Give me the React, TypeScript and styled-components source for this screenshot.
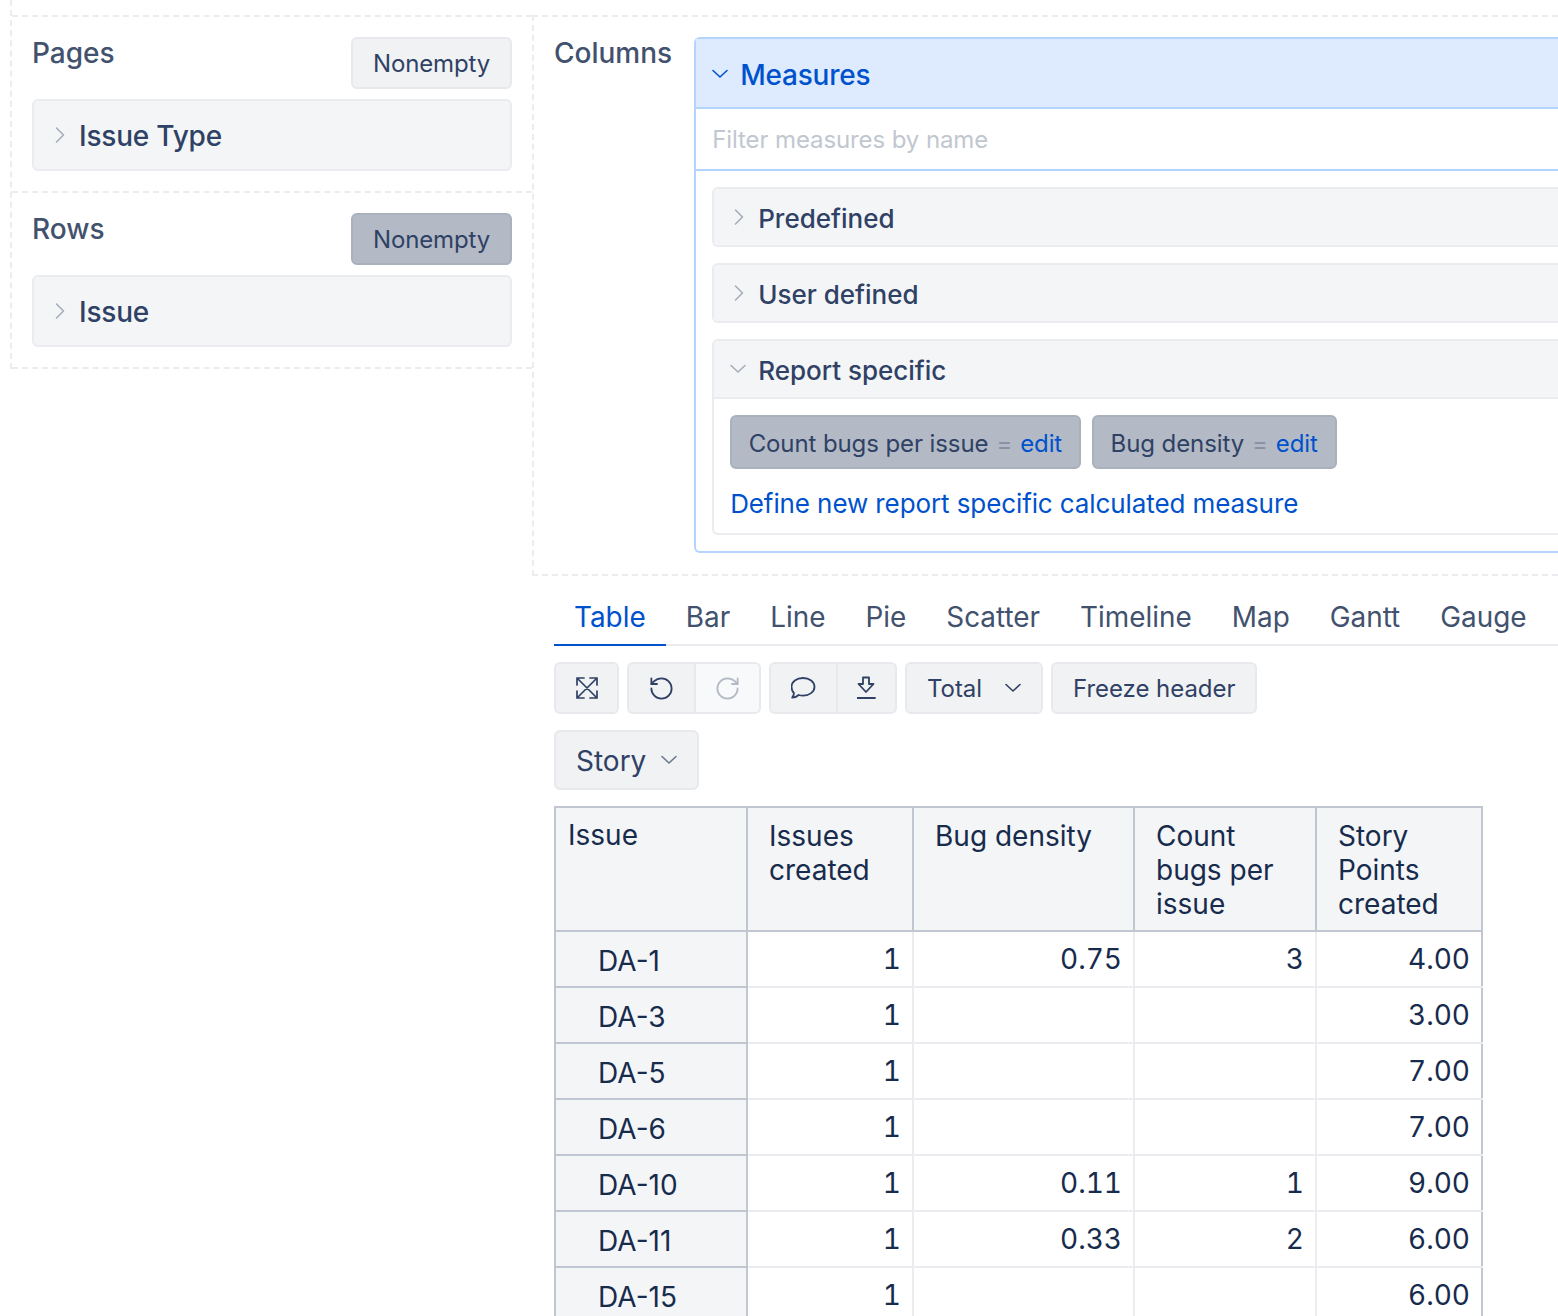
import React from "react";
import styled, { createGlobalStyle } from "styled-components";

const Global = createGlobalStyle`
  html, body { margin: 0; padding: 0; background: #fff; height: 1316px; overflow: hidden; }
  body { font-family: Inter, "Liberation Sans", sans-serif; color: #172b4d; }
  * { box-sizing: border-box; }
`;

const Page = styled.div`
  display: flex;
  align-items: flex-start;
  width: 1558px;
  height: 1316px;
  overflow: hidden;
  padding: 0 0 0 10px;
`;

const LeftColumn = styled.div`
  flex: 0 0 522px;
  padding-top: 15px;
  border-left: 2px dashed #ebecf0;
`;

const DropZone = styled.section`
  height: 176px;
  padding: 20px 20px 0 20px;
  border-top: 2px dashed #ebecf0;
  &:last-child {
    height: 178px;
    border-bottom: 2px dashed #ebecf0;
  }
`;

const ZoneHeader = styled.div`
  display: flex;
  justify-content: space-between;
  align-items: flex-start;
`;

const ZoneLabel = styled.h3`
  margin: 0;
  font-size: 28px;
  line-height: 32px;
  font-weight: 500;
  color: #42526e;
`;

const Button = styled.button<{ $active?: boolean }>`
  display: inline-flex;
  align-items: center;
  justify-content: center;
  height: 52px;
  padding: 2px 20px 0;
  border: 2px solid ${(p) => (p.$active ? "#a9b1bd" : "#e8e9ed")};
  border-radius: 6px;
  background: ${(p) => (p.$active ? "#b3bac5" : "#f1f2f4")};
  color: #2f4164;
  font: 400 24px/32px Inter, sans-serif;
  letter-spacing: -0.05px;
  white-space: nowrap;
`;

const NonemptyButton = styled(Button)`
  letter-spacing: -0.15px;
`;

const DimBox = styled.div`
  display: flex;
  align-items: center;
  gap: 10px;
  height: 72px;
  margin-top: 10px;
  padding: 2px 0 0 15px;
  background: #f4f5f7;
  border: 2px solid #ebecf0;
  border-radius: 6px;
  color: #2f4164;
  font-size: 28px;
  font-weight: 500;
  letter-spacing: -0.2px;
`;

const RightColumn = styled.div`
  flex: 1;
  min-width: 0;
  padding-top: 15px;
`;

const ColumnsZone = styled.section`
  display: flex;
  align-items: flex-start;
  gap: 22px;
  height: 561px;
  padding: 20px 0 0 20px;
  border-left: 2px dashed #ebecf0;
  border-top: 2px dashed #ebecf0;
  border-bottom: 2px dashed #ebecf0;
`;

const Panel = styled.div`
  flex: 0 0 900px;
  height: 516px;
  border: 2px solid #b3d4ff;
  border-right: 0;
  border-radius: 6px 0 0 6px;
`;

const PanelHeader = styled.div`
  display: flex;
  align-items: center;
  gap: 10px;
  height: 70px;
  padding: 4px 0 0 14px;
  background: #deebff;
  border-bottom: 2px solid #b3d4ff;
  color: #0052cc;
  font-size: 28px;
  font-weight: 500;
  letter-spacing: -0.2px;
`;

const FilterRow = styled.div`
  display: flex;
  align-items: center;
  height: 62px;
  padding-left: 16px;
  border-bottom: 2px solid #b3d4ff;
  color: #c1c7d0;
  font-size: 24px;
  letter-spacing: -0.1px;
`;

const GroupList = styled.div`
  display: flex;
  flex-direction: column;
  gap: 16px;
  padding: 16px 0 0 16px;
`;

const Group = styled.div`
  border: 2px solid #ebecf0;
  border-right: 0;
  border-radius: 6px 0 0 6px;
  overflow: hidden;
`;

const GroupHeader = styled.div<{ $open?: boolean }>`
  display: flex;
  align-items: center;
  gap: 10px;
  height: ${(p) => (p.$open ? 58 : 56)}px;
  padding: 2px 0 0 14px;
  background: #f4f5f7;
  color: #2f4164;
  font-size: 26px;
  font-weight: 500;
  border-bottom: ${(p) => (p.$open ? "2px solid #ebecf0" : "0")};
`;

const GroupBody = styled.div`
  height: 134px;
  padding: 16px 16px 0;
`;

const ChipRow = styled.div`
  display: flex;
  gap: 11px;
`;

const Chip = styled.div`
  display: flex;
  align-items: center;
  height: 54px;
  padding: 2px 17px 0 16.5px;
  background: #b3bac5;
  border: 2px solid #a9b1bd;
  border-radius: 6px;
  color: #2f4164;
  font-size: 24px;
  letter-spacing: -0.1px;
  white-space: nowrap;
`;

const Equals = styled.span`
  margin: 0 8px;
  color: #8993a4;
`;

const Link = styled.a`
  color: #0052cc;
`;

const DefineLink = styled(Link)`
  display: block;
  margin-top: 18px;
  font-size: 26px;
  line-height: 34px;
  letter-spacing: -0.1px;
`;

const Content = styled.div`
  padding: 14px 0 0 22px;
`;

const Tabs = styled.div`
  display: flex;
  height: 56px;
  border-bottom: 2px solid #ebecf0;
  width: 1004px;
`;

const Tab = styled.div<{ $active?: boolean }>`
  display: flex;
  align-items: center;
  height: 56px;
  padding: 0 20px;
  font-size: 27.9px;
  color: ${(p) => (p.$active ? "#0052cc" : "#42526e")};
  border-bottom: 2px solid ${(p) => (p.$active ? "#0052cc" : "transparent")};
`;

const Toolbar = styled.div`
  display: flex;
  gap: 8px;
  margin-top: 16px;
`;

const Segmented = styled.div`
  display: flex;
`;

const IconButton = styled.button<{ $w: number; $disabled?: boolean }>`
  display: flex;
  align-items: center;
  justify-content: center;
  width: ${(p) => p.$w}px;
  height: 52px;
  padding: 0;
  background: ${(p) => (p.$disabled ? "#f8f9fa" : "#f1f2f4")};
  color: ${(p) => (p.$disabled ? "#b3bac5" : "#2f4164")};
  border: 2px solid #e8e9ed;
  border-radius: 6px;
  ${Segmented} > &:not(:last-child) {
    border-radius: 6px 0 0 6px;
    border-right: 0;
  }
  ${Segmented} > &:last-child {
    border-radius: 0 6px 6px 0;
  }
`;

const MenuButton = styled(Button)`
  gap: 21px;
  padding-right: 18px;
`;

const StoryButton = styled(Button)`
  gap: 13px;
  height: 60px;
  margin-top: 16px;
  padding-right: 18px;
  font-size: 28px;
  letter-spacing: 0;
`;

const ChevronSlot = styled.span<{ $color: string }>`
  display: flex;
  margin-top: -2px;
  color: ${(p) => p.$color};
`;

const Table = styled.table`
  margin-top: 16px;
  border-collapse: collapse;
  table-layout: fixed;
  width: 928px;
  font-size: 28px;
  line-height: 34px;
  color: #172b4d;
`;

const HeadCell = styled.th<{ $first?: boolean }>`
  height: 121px;
  padding: ${(p) => (p.$first ? "10px 12px 9px" : "11px 21px 9px")};
  background: #f4f5f7;
  border: 2px solid #c1c7d0;
  text-align: left;
  vertical-align: top;
  font-weight: 400;
`;

const BodyRow = styled.tr`
  height: 56px;
`;

const RowHead = styled.th`
  padding: 10px 12px 6px 42px;
  background: #f4f5f7;
  border: 2px solid #c1c7d0;
  text-align: left;
  font-weight: 400;
`;

const ValueCell = styled.td`
  padding: 9px 11px 9px;
  border: 2px solid #ebecf0;
  text-align: right;
  font-variant-numeric: tabular-nums;
  &:last-child {
    border-right: 2px solid #c1c7d0;
  }
`;

type Dir = "right" | "down";
const Chevron = ({ dir }: { dir: Dir }) => (
  <svg width={20} height={20} viewBox="0 0 20 20" fill="none" stroke="currentColor" strokeWidth="1.6" strokeLinecap="round" strokeLinejoin="round">
    {dir === "right" ? <path d="M7.500 3l7 7-7 7" /> : <path d="M3 6.500l7 6.500 7-6.500" />}
  </svg>
);

const ExpandIcon = () => (
  <svg width="24" height="24" viewBox="0 0 24 24" fill="none" stroke="currentColor" strokeWidth="1.7" strokeLinecap="round" strokeLinejoin="round">
    <path d="M2 2l20 20M22 2L2 22M2 9V2h7M15 2h7v7M22 15v7h-7M9 22H2v-7" />
  </svg>
);

const UndoIcon = () => (
  <svg width="27" height="27" viewBox="0 0 24 24" fill="none" stroke="currentColor" strokeWidth="1.6" strokeLinecap="round" strokeLinejoin="round">
    <path d="M3 12a9 9 0 1 0 9-9 9.750 9.750 0 0 0-6.740 2.740L3 8" />
    <path d="M3 3v5h5" />
  </svg>
);

const RedoIcon = () => (
  <svg width="27" height="27" viewBox="0 0 24 24" fill="none" stroke="currentColor" strokeWidth="1.6" strokeLinecap="round" strokeLinejoin="round">
    <path d="M21 12a9 9 0 1 1-9-9c2.520 0 4.930 1 6.740 2.740L21 8" />
    <path d="M21 3v5h-5" />
  </svg>
);

const CommentIcon = () => (
  <svg width="26" height="24" viewBox="1 0 26 24" fill="none" stroke="currentColor" strokeWidth="1.8" strokeLinecap="round" strokeLinejoin="round">
    <path d="M13 2c6.400 0 11.500 3.700 11.500 8.800S19.400 19.600 13 19.600c-1.500 0-3-.2-4.300-.6-1.500 1.400-3.700 2.500-6.500 2.600 1.100-1.300 1.800-2.900 1.700-4.600C2.400 15.500 1.500 13.200 1.500 10.800 1.500 5.700 6.600 2 13 2z" />
  </svg>
);

const DownloadIcon = () => (
  <svg width="20" height="24" viewBox="1 0 20 24" fill="none" stroke="currentColor" strokeWidth="1.8" strokeLinecap="round" strokeLinejoin="round">
    <path d="M7 1.500h6v6.500h4.500L10 16 2.500 8H7z" />
    <path d="M1 22h18" />
  </svg>
);

const tabs = ["Table", "Bar", "Line", "Pie", "Scatter", "Timeline", "Map", "Gantt", "Gauge"];

const rows: [string, string, string, string, string][] = [
  ["DA-1", "1", "0.75", "3", "4.00"],
  ["DA-3", "1", "", "", "3.00"],
  ["DA-5", "1", "", "", "7.00"],
  ["DA-6", "1", "", "", "7.00"],
  ["DA-10", "1", "0.11", "1", "9.00"],
  ["DA-11", "1", "0.33", "2", "6.00"],
  ["DA-15", "1", "", "", "6.00"],
];

export default function App() {
  return (
    <Page>
      <Global />
      <LeftColumn>
        <DropZone>
          <ZoneHeader>
            <ZoneLabel>Pages</ZoneLabel>
            <NonemptyButton>Nonempty</NonemptyButton>
          </ZoneHeader>
          <DimBox>
            <ChevronSlot $color="#a5adba"><Chevron dir="right" /></ChevronSlot>
            Issue Type
          </DimBox>
        </DropZone>
        <DropZone>
          <ZoneHeader>
            <ZoneLabel>Rows</ZoneLabel>
            <NonemptyButton $active>Nonempty</NonemptyButton>
          </ZoneHeader>
          <DimBox>
            <ChevronSlot $color="#a5adba"><Chevron dir="right" /></ChevronSlot>
            Issue
          </DimBox>
        </DropZone>
      </LeftColumn>
      <RightColumn>
        <ColumnsZone>
          <ZoneLabel>Columns</ZoneLabel>
          <Panel>
            <PanelHeader>
              <ChevronSlot $color="#0052cc"><Chevron dir="down" /></ChevronSlot>
              Measures
            </PanelHeader>
            <FilterRow>Filter measures by name</FilterRow>
            <GroupList>
              <Group>
                <GroupHeader>
                  <ChevronSlot $color="#a5adba"><Chevron dir="right" /></ChevronSlot>
                  Predefined
                </GroupHeader>
              </Group>
              <Group>
                <GroupHeader>
                  <ChevronSlot $color="#a5adba"><Chevron dir="right" /></ChevronSlot>
                  User defined
                </GroupHeader>
              </Group>
              <Group>
                <GroupHeader $open>
                  <ChevronSlot $color="#a5adba"><Chevron dir="down" /></ChevronSlot>
                  Report specific
                </GroupHeader>
                <GroupBody>
                  <ChipRow>
                    <Chip>Count bugs per issue<Equals>=</Equals><Link>edit</Link></Chip>
                    <Chip>Bug density<Equals>=</Equals><Link>edit</Link></Chip>
                  </ChipRow>
                  <DefineLink>Define new report specific calculated measure</DefineLink>
                </GroupBody>
              </Group>
            </GroupList>
          </Panel>
        </ColumnsZone>
        <Content>
          <Tabs>
            {tabs.map((t, i) => (
              <Tab key={t} $active={i === 0}>{t}</Tab>
            ))}
          </Tabs>
          <Toolbar>
            <IconButton $w={65}><ExpandIcon /></IconButton>
            <Segmented>
              <IconButton $w={67}><UndoIcon /></IconButton>
              <IconButton $w={67} $disabled><RedoIcon /></IconButton>
            </Segmented>
            <Segmented>
              <IconButton $w={67}><CommentIcon /></IconButton>
              <IconButton $w={61}><DownloadIcon /></IconButton>
            </Segmented>
            <MenuButton>Total<ChevronSlot $color="#2f4164"><Chevron dir="down" /></ChevronSlot></MenuButton>
            <Button>Freeze header</Button>
          </Toolbar>
          <StoryButton>Story<ChevronSlot $color="#6b778c"><Chevron dir="down" /></ChevronSlot></StoryButton>
          <Table>
            <colgroup>
              <col width={192} />
              <col width={166} />
              <col width={221} />
              <col width={182} />
              <col width={166} />
            </colgroup>
            <thead>
              <tr>
                <HeadCell $first>Issue</HeadCell>
                <HeadCell>Issues created</HeadCell>
                <HeadCell>Bug density</HeadCell>
                <HeadCell>Count bugs per issue</HeadCell>
                <HeadCell>Story Points created</HeadCell>
              </tr>
            </thead>
            <tbody>
              {rows.map((r) => (
                <BodyRow key={r[0]}>
                  <RowHead>{r[0]}</RowHead>
                  <ValueCell>{r[1]}</ValueCell>
                  <ValueCell>{r[2]}</ValueCell>
                  <ValueCell>{r[3]}</ValueCell>
                  <ValueCell>{r[4]}</ValueCell>
                </BodyRow>
              ))}
            </tbody>
          </Table>
        </Content>
      </RightColumn>
    </Page>
  );
}
